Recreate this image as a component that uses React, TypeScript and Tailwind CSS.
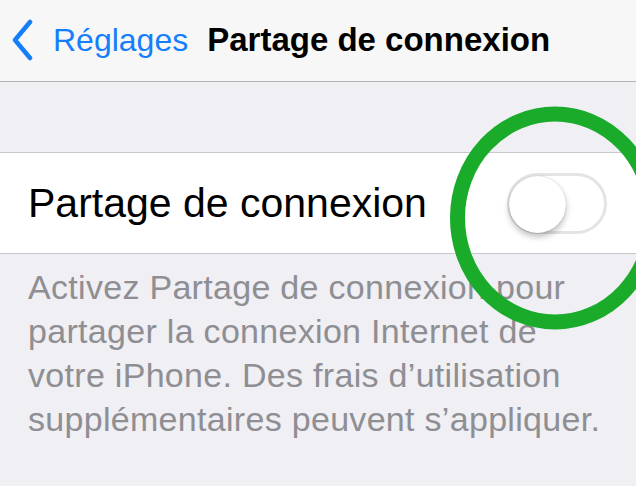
import React from "react";

const Chevron = () => (
  <svg width="22" height="42" viewBox="0 0 22 42" className="shrink-0">
    <path
      d="M18 3 L3 21 L18 39"
      fill="none"
      stroke="#157efb"
      strokeWidth="4.5"
      strokeLinecap="round"
      strokeLinejoin="round"
    />
  </svg>
);

const Toggle = () => (
  <div className="relative w-[100px] h-[61px] rounded-full border-[3px] border-[#e4e4e6] bg-white">
    <div className="absolute left-[-1px] top-[0px] w-[57px] h-[57px] rounded-full bg-white shadow-[0_4px_6px_rgba(0,0,0,0.25),0_0_1px_rgba(0,0,0,0.3)]" />
  </div>
);

export default function App() {
  return (
    <div className="relative w-[636px] h-[486px] overflow-hidden bg-[#efeff4] font-['Liberation_Sans',Arial,sans-serif]">
      {/* barre de navigation */}
      <div className="h-[82px] bg-[#f7f7f8] border-b border-[#b1b1b4] flex items-center pl-[12px] pb-[2px]">
        <Chevron />
        <span className="ml-[19px] text-[32px] text-[#157efb] leading-none">Réglages</span>
        <span className="ml-[19px] text-[33px] font-bold text-black leading-none">Partage de connexion</span>
      </div>

      <div className="h-[70px]" />

      {/* cellule */}
      <div className="h-[102px] bg-white border-y border-[#c8c7cc] flex items-center justify-between pl-[28px] pr-[29px]">
        <span className="text-[41px] text-black pt-[2px]">Partage de connexion</span>
        <Toggle />
      </div>

      <p className="pl-[28px] pr-[24px] pt-[11px] text-[34px] leading-[44px] tracking-[0.3px] text-[#8e8e93]">
        Activez Partage de connexion pour partager la connexion Internet de votre iPhone. Des frais d’utilisation supplémentaires peuvent s’appliquer.
      </p>

      {/* cercle vert d'annotation */}
      <svg className="absolute inset-0 pointer-events-none" width="636" height="486">
        <ellipse cx="555" cy="218" rx="97.5" ry="104" fill="none" stroke="#1aab2b" strokeWidth="15" />
      </svg>
    </div>
  );
}
